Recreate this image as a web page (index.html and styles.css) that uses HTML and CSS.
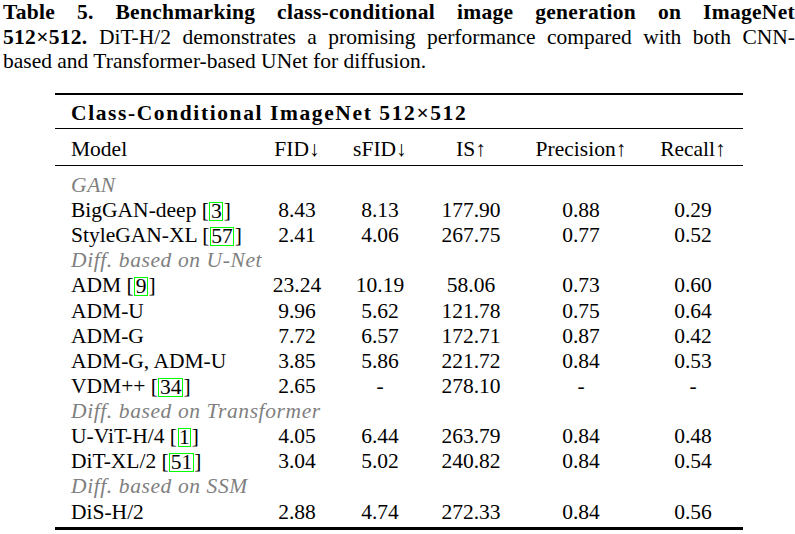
FILE: index.html
```html
<!DOCTYPE html>
<html>
<head>
<meta charset="utf-8">
<link rel="stylesheet" href="styles.css">
</head>
<body>
<div class="caption">
  <div class="cap-line just"><b>Table 5. Benchmarking class-conditional image generation on ImageNet</b></div>
  <div class="cap-line just"><b>512×512.</b> DiT-H/2 demonstrates a promising performance compared with both CNN-</div>
  <div class="cap-line">based and Transformer-based UNet for diffusion.</div>
</div>

<div class="tbl">
  <div class="title-row">Class-Conditional ImageNet 512×512</div>
  <div class="grid head">
    <div class="c1">Model</div><div>FID↓</div><div>sFID↓</div><div>IS↑</div><div>Precision↑</div><div>Recall↑</div>
  </div>
  <div class="grid body">
    <div class="group">GAN</div>
    <div class="c1">BigGAN-deep [<span class="cite">3</span>]</div><div>8.43</div><div>8.13</div><div>177.90</div><div>0.88</div><div>0.29</div>
    <div class="c1">StyleGAN-XL [<span class="cite">57</span>]</div><div>2.41</div><div>4.06</div><div>267.75</div><div>0.77</div><div>0.52</div>
    <div class="group">Diff. based on U-Net</div>
    <div class="c1">ADM [<span class="cite">9</span>]</div><div>23.24</div><div>10.19</div><div>58.06</div><div>0.73</div><div>0.60</div>
    <div class="c1">ADM-U</div><div>9.96</div><div>5.62</div><div>121.78</div><div>0.75</div><div>0.64</div>
    <div class="c1">ADM-G</div><div>7.72</div><div>6.57</div><div>172.71</div><div>0.87</div><div>0.42</div>
    <div class="c1">ADM-G, ADM-U</div><div>3.85</div><div>5.86</div><div>221.72</div><div>0.84</div><div>0.53</div>
    <div class="c1">VDM++ [<span class="cite">34</span>]</div><div>2.65</div><div>-</div><div>278.10</div><div>-</div><div>-</div>
    <div class="group">Diff. based on Transformer</div>
    <div class="c1">U-ViT-H/4 [<span class="cite">1</span>]</div><div>4.05</div><div>6.44</div><div>263.79</div><div>0.84</div><div>0.48</div>
    <div class="c1">DiT-XL/2 [<span class="cite">51</span>]</div><div>3.04</div><div>5.02</div><div>240.82</div><div>0.84</div><div>0.54</div>
    <div class="group">Diff. based on SSM</div>
    <div class="c1">DiS-H/2</div><div>2.88</div><div>4.74</div><div>272.33</div><div>0.84</div><div>0.56</div>
  </div>
</div>
</body>
</html>
```

FILE: styles.css
```css
html, body {
  margin: 0;
  padding: 0;
  background: #ffffff;
}
body {
  font-family: "Liberation Serif", "DejaVu Serif", serif;
  color: #000;
  font-size: 21.5px;
}
.caption {
  width: 792px;
  padding-left: 3px;
}
.cap-line {
  line-height: 24.5px;
  height: 24.5px;
  white-space: nowrap;
}
.cap-line.just {
  text-align: justify;
  text-align-last: justify;
  white-space: normal;
}
.cap-line b {
  letter-spacing: 0.3px;
}
.tbl {
  margin-top: 19.5px;
  margin-left: 55px;
  width: 688px;
  border-top: 2.6px solid #000;
  border-bottom: 3px solid #000;
}
.title-row {
  height: 29px;
  padding-top: 4px;
  line-height: 29px;
  padding-left: 16px;
  font-weight: bold;
  letter-spacing: 1.6px;
  border-bottom: 1.7px solid #000;
}
.grid {
  display: grid;
  grid-template-columns: 205px 74px 92px 90px 130px 94px;
  padding-right: 3px;
}
.grid > div {
  text-align: center;
  white-space: nowrap;
}
.grid > div.c1 {
  text-align: left;
  padding-left: 16px;
}
.head {
  height: 32px;
  padding-top: 4px;
  line-height: 32px;
  border-bottom: 1.7px solid #000;
}
.body {
  padding-top: 6.8px;
  padding-bottom: 2.6px;
  grid-auto-rows: 25.15px;
  line-height: 25.15px;
}
.group {
  grid-column: 1 / -1;
  text-align: left !important;
  padding-left: 16px;
  font-style: italic;
  color: #808080;
  letter-spacing: 0.6px;
}
.cite {
  display: inline-block;
  border: 1px solid #00ff00;
  line-height: 17px;
  padding: 0 0.5px;
  margin: 0 0.5px;
  vertical-align: -1px;
}
```
